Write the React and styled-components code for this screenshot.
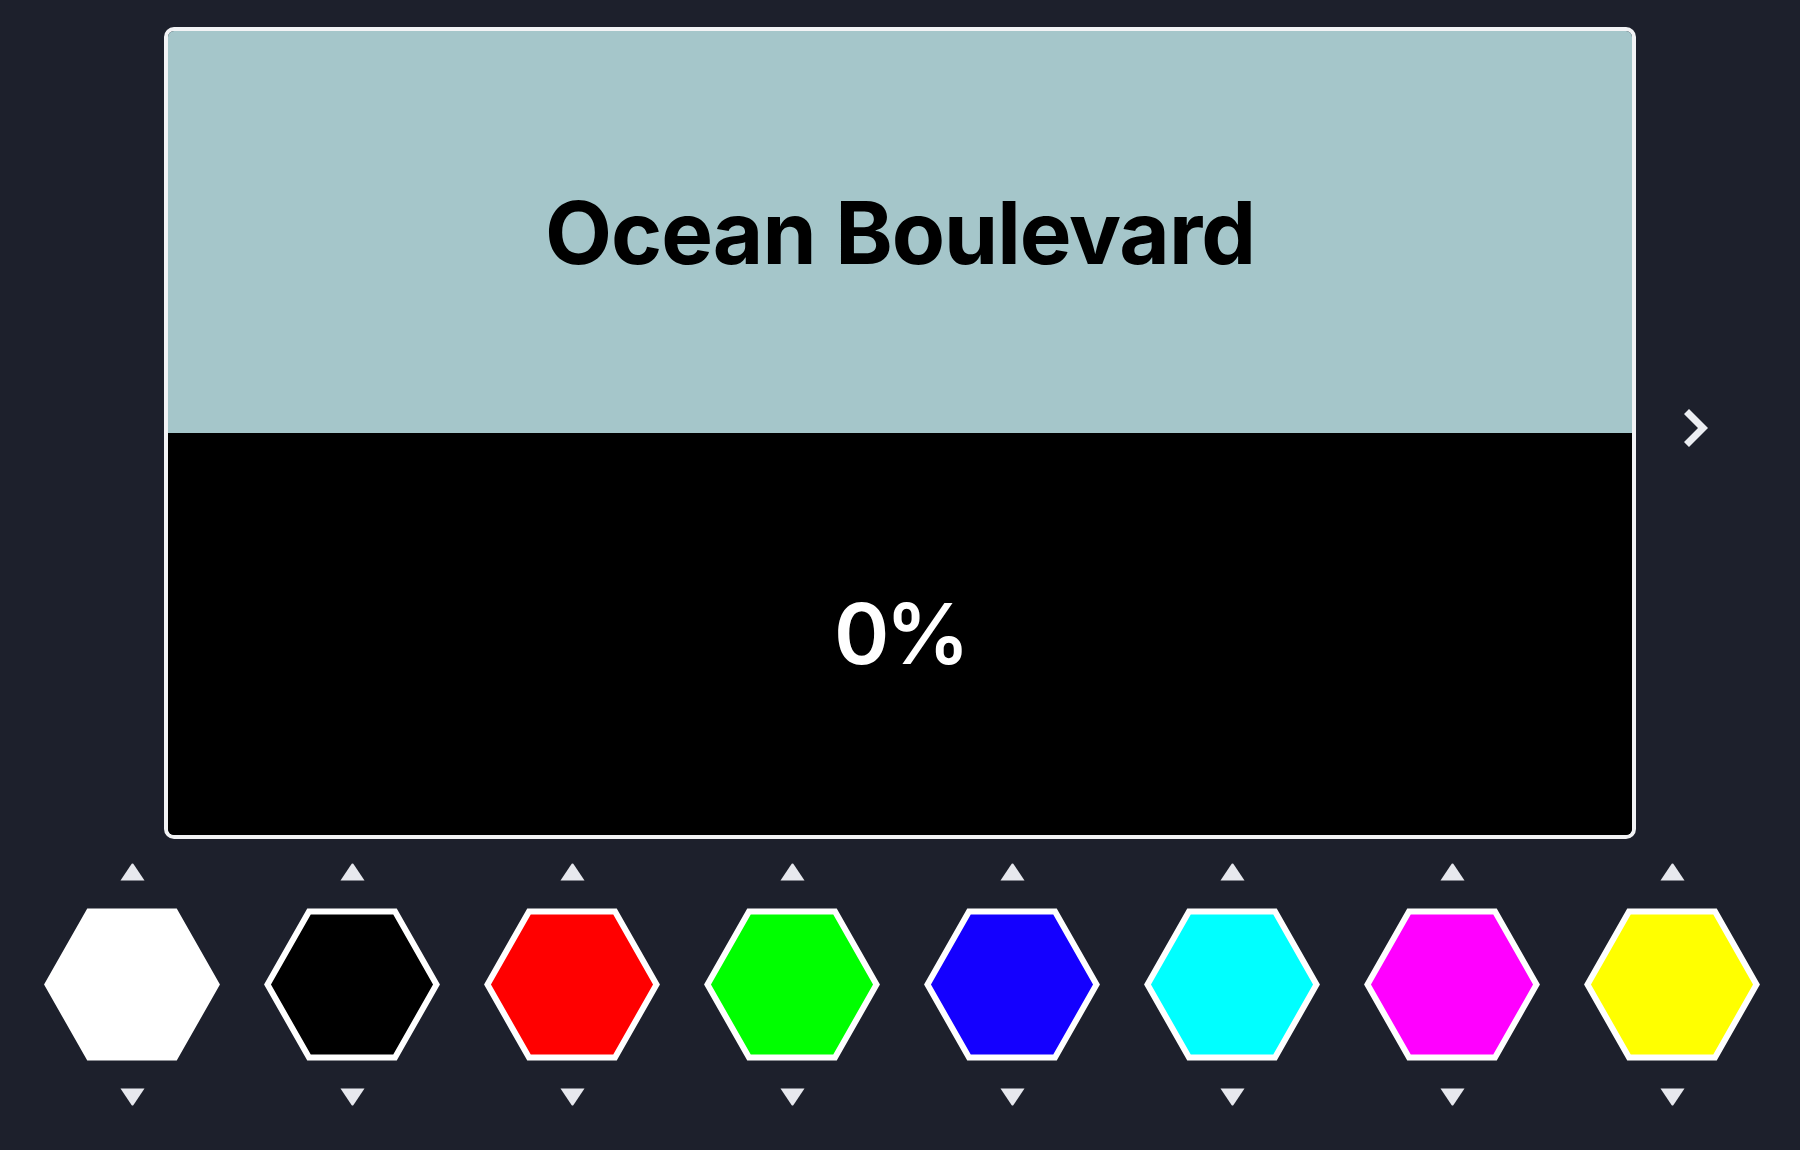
import React from "react";
import styled, { createGlobalStyle } from "styled-components";

const GlobalStyle = createGlobalStyle`
  html, body {
    margin: 0;
    padding: 0;
    background: #1d202c;
  }
  body {
    font-family: Inter, "Noto Sans", "Liberation Sans", sans-serif;
  }
  * { box-sizing: border-box; }
`;

const Page = styled.main`
  width: 1800px;
  height: 1150px;
  background: #1d202c;
  display: flex;
  flex-direction: column;
  align-items: stretch;
  padding-top: 27px;
  overflow: hidden;
`;

const Stage = styled.section`
  display: grid;
  grid-template-columns: 164px 1472px 164px;
  align-items: center;
`;

const Card = styled.div`
  grid-column: 2;
  height: 812px;
  border: 4px solid #f2f3f5;
  border-radius: 10px;
  overflow: hidden;
  display: flex;
  flex-direction: column;
`;

const Half = styled.div`
  flex: 1;
  display: flex;
  align-items: center;
  justify-content: center;
  background: ${(p) => p.$bg};
  color: ${(p) => p.$fg};
`;

const Title = styled.h1`
  margin: 0;
  font-family: Inter, "Noto Sans", sans-serif;
  font-weight: 700;
  font-size: 87px;
  line-height: 1;
  letter-spacing: -1px;
`;

const Percent = styled.div`
  font-family: Inter, "Noto Sans", sans-serif;
  font-weight: 600;
  font-size: 84px;
  line-height: 1;
  letter-spacing: -4px;
`;

const NavButton = styled.button`
  grid-column: 3;
  justify-self: start;
  width: 60px;
  height: 60px;
  margin: 0 0 10px 30px;
  padding: 0;
  border: none;
  background: transparent;
  color: #eceef2;
  display: flex;
  align-items: center;
  justify-content: center;
  cursor: pointer;
`;

const Palette = styled.section`
  display: flex;
  justify-content: flex-start;
  padding-left: 22px;
  margin-top: 24px;
`;

const Swatch = styled.div`
  width: 220px;
  display: flex;
  flex-direction: column;
  align-items: center;
`;

const ArrowButton = styled.button`
  width: 25px;
  height: 18px;
  padding: 0;
  border: none;
  background: transparent;
  display: flex;
  align-items: center;
  justify-content: center;
  cursor: pointer;
  margin-top: ${(p) => p.$mt || 0}px;
`;

const HexWrap = styled.div`
  width: 176px;
  height: 153px;
  margin-top: 27px;
  display: flex;
`;

const colors = ["#ffffff", "#000000", "#ff0000", "#00ff00", "#1400ff", "#00ffff", "#ff00ff", "#ffff00"];

function Chevron() {
  return (
    <svg width="28" height="44" viewBox="0 0 28 44">
      <polygon points="2,8 7,3 26,22 7,41 2,36 16,22" fill="currentColor" />
    </svg>
  );
}

function Triangle({ down }) {
  return (
    <svg width="25" height="18" viewBox="0 0 25 18">
      {down ? (
        <path d="M0.5 0.5 L24.5 0.5 L13.3 17.2 Q12.5 18 11.7 17.2 Z" fill="#e7e8ee" />
      ) : (
        <path d="M0.5 17.5 L24.5 17.5 L13.3 0.8 Q12.5 0 11.7 0.8 Z" fill="#e7e8ee" />
      )}
    </svg>
  );
}

function Hexagon({ color }) {
  return (
    <svg width="176" height="153" viewBox="0 0 176 153">
      <polygon
        points="45,3.5 131,3.5 172.5,76.5 131,149.5 45,149.5 3.5,76.5"
        fill={color}
        stroke="#ffffff"
        strokeWidth="6"
        strokeLinejoin="miter"
      />
    </svg>
  );
}

export default function App() {
  return (
    <>
      <GlobalStyle />
      <Page>
        <Stage>
          <Card>
            <Half $bg="#a5c6ca" $fg="#000000">
              <Title>Ocean Boulevard</Title>
            </Half>
            <Half $bg="#000000" $fg="#ffffff">
              <Percent>0%</Percent>
            </Half>
          </Card>
          <NavButton aria-label="Next">
            <Chevron />
          </NavButton>
        </Stage>
        <Palette>
          {colors.map((c) => (
            <Swatch key={c}>
              <ArrowButton aria-label="Up">
                <Triangle />
              </ArrowButton>
              <HexWrap>
                <Hexagon color={c} />
              </HexWrap>
              <ArrowButton aria-label="Down" $mt={27}>
                <Triangle down />
              </ArrowButton>
            </Swatch>
          ))}
        </Palette>
      </Page>
    </>
  );
}
